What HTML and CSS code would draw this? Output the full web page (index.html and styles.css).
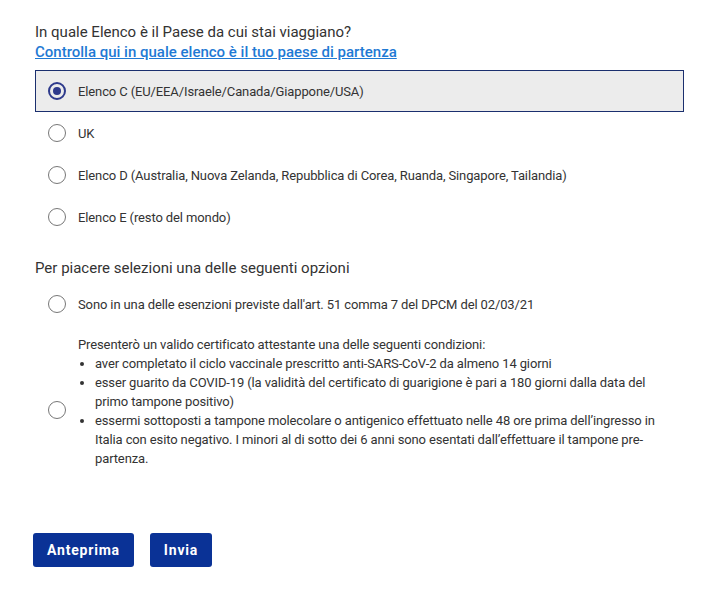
FILE: index.html
```html
<!DOCTYPE html>
<html lang="it">
<head>
    <meta charset="UTF-8">
    <meta name="viewport" content="width=device-width, initial-scale=1.0">
    <title>Elenco Paese</title>
    <link rel="stylesheet" href="styles.css">
</head>
<body>
    <main class="form">
        <h2 class="question">In quale Elenco è il Paese da cui stai viaggiano?</h2>
        <a class="help-link" href="#">Controlla qui in quale elenco è il tuo paese di partenza</a>

        <div class="options">
            <label class="option selected">
                <span class="radio checked"></span>
                <span class="option-text">Elenco C (EU/EEA/Israele/Canada/Giappone/USA)</span>
            </label>
            <label class="option">
                <span class="radio"></span>
                <span class="option-text">UK</span>
            </label>
            <label class="option">
                <span class="radio"></span>
                <span class="option-text">Elenco D (Australia, Nuova Zelanda, Repubblica di Corea, Ruanda, Singapore, Tailandia)</span>
            </label>
            <label class="option">
                <span class="radio"></span>
                <span class="option-text">Elenco E (resto del mondo)</span>
            </label>
        </div>

        <h2 class="question section">Per piacere selezioni una delle seguenti opzioni</h2>

        <div class="options">
            <label class="option">
                <span class="radio"></span>
                <span class="option-text">Sono in una delle esenzioni previste dall'art. 51 comma 7 del DPCM del 02/03/21</span>
            </label>
            <label class="option tall">
                <span class="radio"></span>
                <span class="option-text">
                    Presenterò un valido certificato attestante una delle seguenti condizioni:
                    <ul class="conditions">
                        <li>aver completato il ciclo vaccinale prescritto anti-SARS-CoV-2 da almeno 14 giorni</li>
                        <li>esser guarito da COVID-19 (la validità del certificato di guarigione è pari a 180 giorni dalla data del primo tampone positivo)</li>
                        <li>essermi sottoposti a tampone molecolare o antigenico effettuato nelle 48 ore prima dell’ingresso in Italia con esito negativo. I minori al di sotto dei 6 anni sono esentati dall’effettuare il tampone pre-partenza.</li>
                    </ul>
                </span>
            </label>
        </div>

        <div class="actions">
            <button type="button">Anteprima</button>
            <button type="button">Invia</button>
        </div>
    </main>
</body>
</html>
```

FILE: styles.css
```css
body {
    margin: 0;
    padding: 0;
    background-color: #fff;
    font-family: Roboto, "Liberation Sans", Arial, sans-serif;
    color: #333;
}
.form {
    width: 649px;
    padding: 22px 0 0 35px;
}
.question {
    margin: 0;
    font-size: 15px;
    font-weight: 400;
    line-height: 20px;
    color: #333;
}
.question.section {
    margin: 20px 0 5px;
}
.help-link {
    display: block;
    font-size: 15px;
    font-weight: 500;
    line-height: 20px;
    color: #1f7ad4;
    text-decoration: underline;
    margin-bottom: 8px;
}
.option {
    display: flex;
    align-items: center;
    gap: 12px;
    height: 42px;
    box-sizing: border-box;
    padding-left: 13px;
    font-size: 13px;
    line-height: 19px;
    letter-spacing: -0.12px;
    cursor: pointer;
}
.option.selected {
    background-color: #ececec;
    border: 1px solid #1b2f6e;
    padding-left: 12px;
}
.option.tall {
    height: auto;
    padding-top: 10px;
    padding-right: 12px;
    padding-bottom: 10px;
}
.radio {
    flex: none;
    width: 18px;
    height: 18px;
    box-sizing: border-box;
    border: 1.5px solid #777;
    border-radius: 50%;
    display: flex;
    align-items: center;
    justify-content: center;
}
.radio.checked {
    border: 2px solid #2e3a8c;
}
.radio.checked::after {
    content: "";
    width: 8px;
    height: 8px;
    border-radius: 50%;
    background-color: #2e3a8c;
}
.conditions {
    margin: 0 0 16px;
    padding-left: 17px;
}
.actions {
    display: flex;
    gap: 16px;
    margin-top: 39px;
    margin-left: -2px;
}
button {
    background-color: #0a3296;
    color: #fff;
    border: none;
    border-radius: 3px;
    height: 34px;
    padding: 0 14px;
    font-family: Roboto, "Liberation Sans", Arial, sans-serif;
    font-size: 14px;
    font-weight: 700;
    letter-spacing: 0.8px;
    cursor: pointer;
}
```
